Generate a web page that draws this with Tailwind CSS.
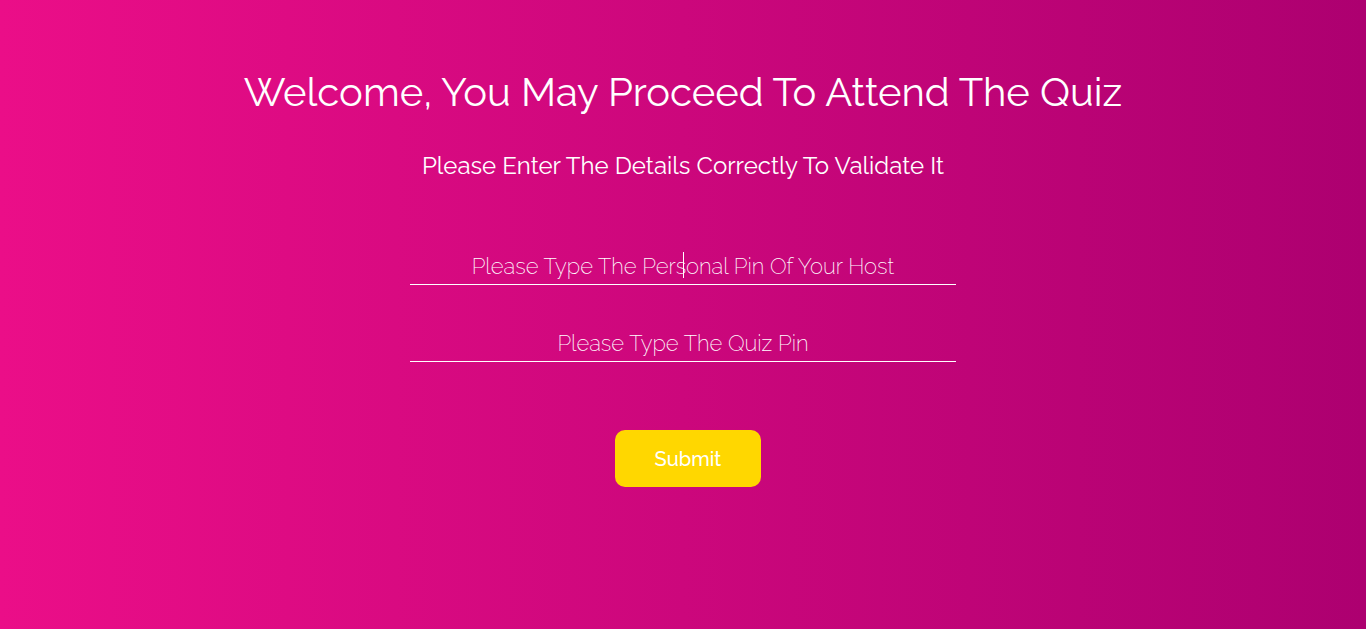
<!DOCTYPE html>
<html lang="en">
<head>
<meta charset="utf-8">
<meta name="viewport" content="width=device-width, initial-scale=1">
<title>Attend The Quiz</title>
<script src="https://cdn.jsdelivr.net/npm/@tailwindcss/browser@4"></script>
</head>
<body class="min-h-screen bg-linear-to-r/srgb from-[#eb0e88] to-[#ad0070] font-['Raleway','Lato',sans-serif] text-white">
<main class="flex flex-col items-center pt-16 text-center">
  <h1 class="text-[40px] leading-14 font-normal">Welcome, You May Proceed To Attend The Quiz</h1>
  <h2 class="mt-6 text-[24px] leading-11 font-normal">Please Enter The Details Correctly To Validate It</h2>
  <form class="mt-15 flex w-full flex-col items-center">
    <div class="relative w-2/5">
      <input type="text" aria-label="Personal pin of your host" placeholder="Please Type The Personal Pin Of Your Host" class="block h-[37px] w-full border-b border-white bg-transparent pb-px text-center text-[22px] font-extralight caret-transparent outline-none placeholder:text-white">
      <span class="absolute top-1 left-1/2 h-[26px] w-px bg-white" aria-hidden="true"></span>
    </div>
    <input type="text" aria-label="Quiz pin" placeholder="Please Type The Quiz Pin" class="mt-10 block h-[37px] w-2/5 border-b border-white bg-transparent pb-px text-center text-[22px] font-extralight outline-none placeholder:text-white">
    <button type="button" class="mt-17 ml-[10px] rounded-[10px] bg-[#ffd700] px-10 pt-[13px] pb-[11px] text-[20px] leading-[33px] font-medium">Submit</button>
  </form>
</main>
</body>
</html>
